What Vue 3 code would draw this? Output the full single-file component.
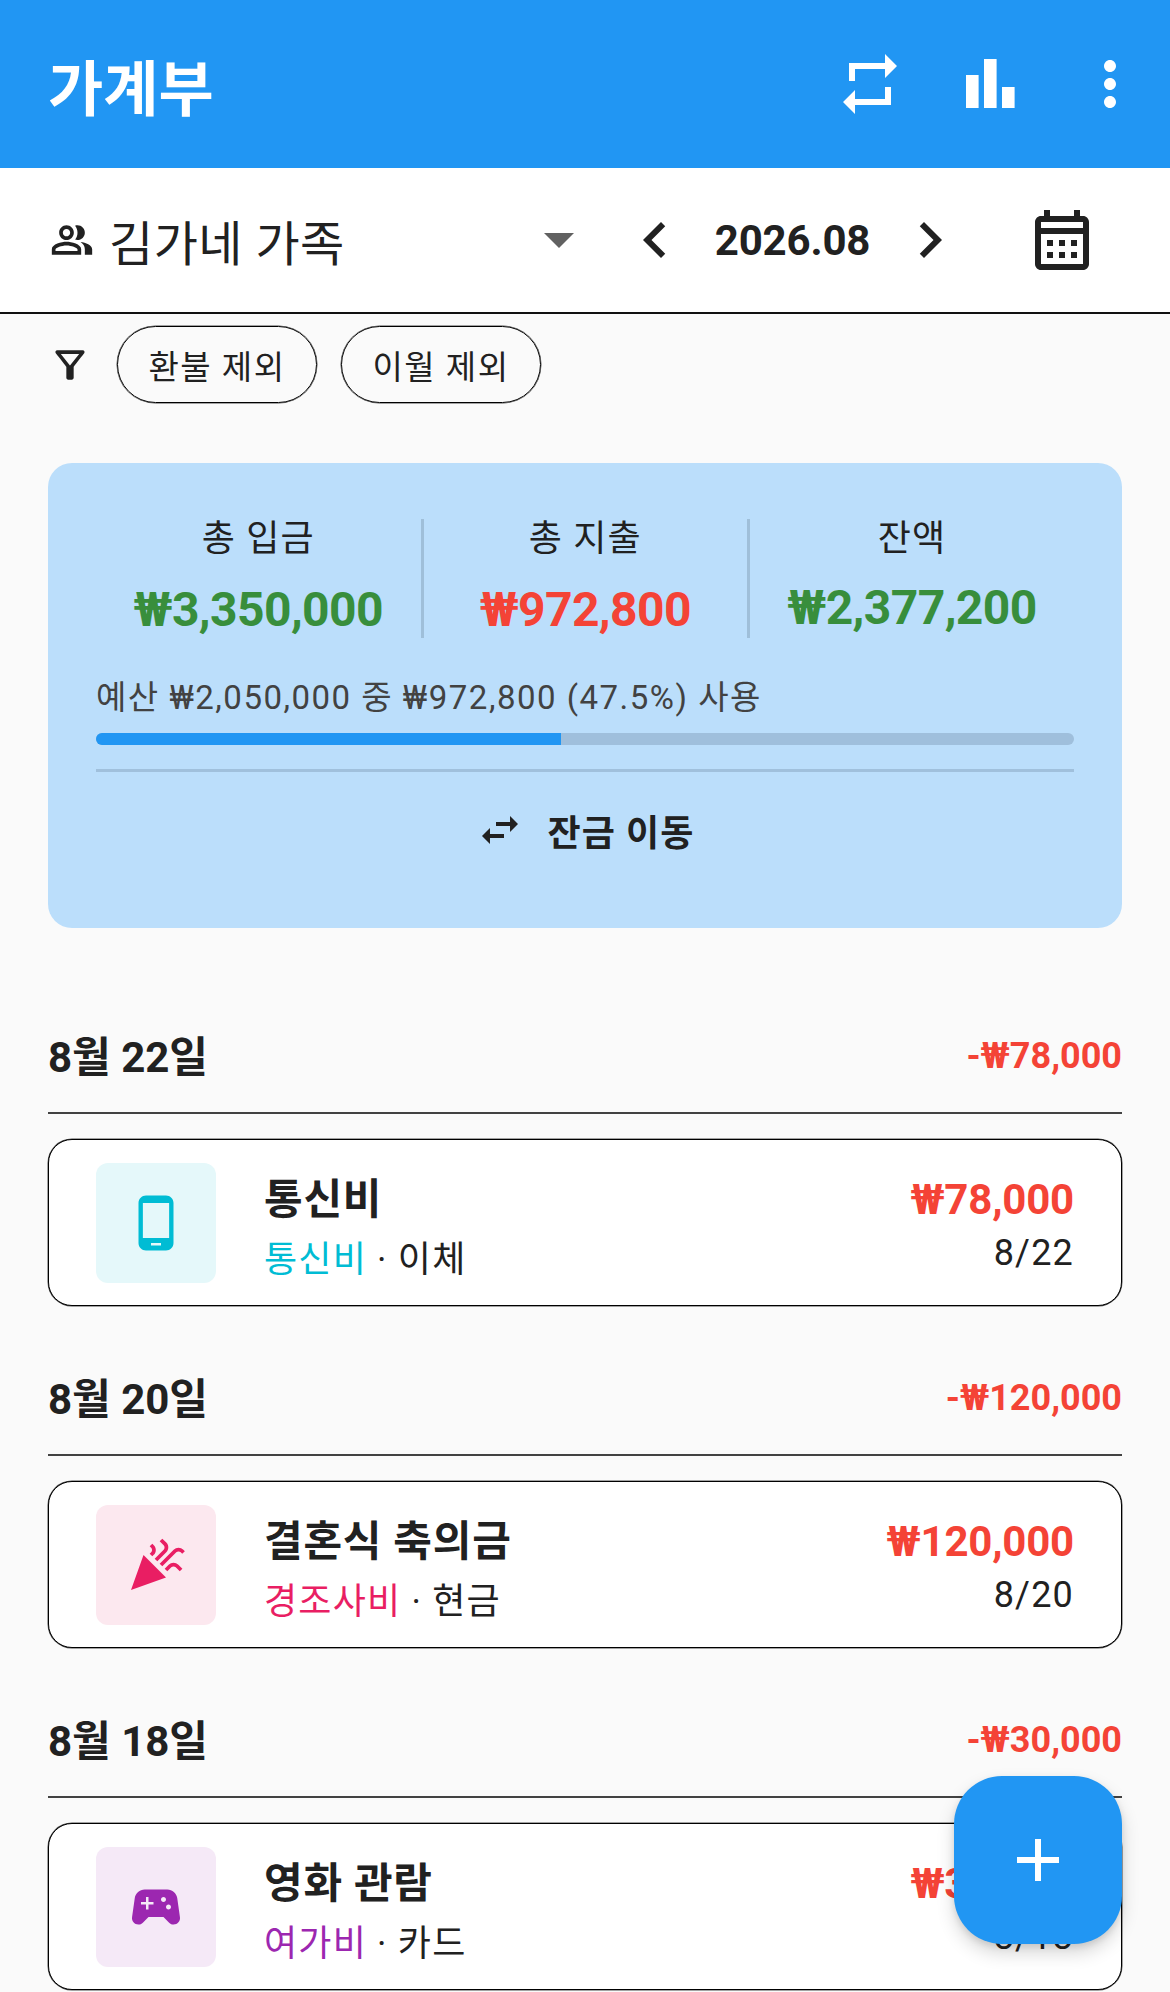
<template>
  <div class="app">
    <header class="top-bar">
      <h1 class="title">가계부</h1>
      <div class="top-actions">
        <svg class="icon-72" viewBox="0 0 24 24" fill="#fff"><path :d="icons.repeat" /></svg>
        <svg class="icon-72" viewBox="0 0 72 72" fill="#fff">
          <rect x="12" y="27" width="12.6" height="33" />
          <rect x="30" y="11" width="12.6" height="49" />
          <rect x="48" y="39" width="12.6" height="21" />
        </svg>
        <svg class="icon-72" viewBox="0 0 24 24" fill="#fff"><path :d="icons.more" /></svg>
      </div>
    </header>

    <!-- Ledger and month selector -->
    <div class="selector">
      <div class="ledger">
        <svg class="icon-people" viewBox="0 0 24 24" fill="#212121"><path :d="icons.people" /></svg>
        <span class="ledger-name">김가네 가족</span>
        <span class="caret"></span>
      </div>
      <svg class="icon-72" viewBox="0 0 24 24" fill="#212121"><path :d="icons.chevronLeft" /></svg>
      <span class="month">2026.08</span>
      <svg class="icon-72" viewBox="0 0 24 24" fill="#212121"><path :d="icons.chevronRight" /></svg>
      <svg class="icon-72 calendar" viewBox="0 0 24 24" fill="#212121"><path :d="icons.calendar" /></svg>
    </div>

    <div class="filters">
      <svg class="icon-filter" viewBox="0 0 24 24" fill="#212121"><path :d="icons.filter" /></svg>
      <span class="chip">환불 제외</span>
      <span class="chip">이월 제외</span>
    </div>

    <section class="summary">
      <div class="stats">
        <div v-for="stat in stats" :key="stat.label" class="stat">
          <span class="stat-label">{{ stat.label }}</span>
          <span class="stat-value" :class="{ raised: stat.raised }" :style="{ color: stat.color }">{{ stat.value }}</span>
        </div>
      </div>
      <p class="budget">예산 ₩2,050,000 중 ₩972,800 (47.5%) 사용</p>
      <div class="bar">
        <div class="bar-fill" :style="{ width: budgetUsed + '%' }"></div>
      </div>
      <div class="rule"></div>
      <div class="transfer">
        <svg class="icon-swap" viewBox="0 0 24 24" fill="#212121"><path :d="icons.swap" /></svg>
        <span>잔금 이동</span>
      </div>
    </section>

    <main class="list">
      <section v-for="item in items" :key="item.day" class="group">
        <div class="group-head">
          <span class="day">{{ item.day }}</span>
          <span class="day-total">-{{ item.amount }}</span>
        </div>
        <div class="card">
          <div class="card-icon" :style="{ background: item.tint }">
            <svg class="icon-60" viewBox="0 0 24 24" :fill="item.color"><path :d="item.icon" /></svg>
          </div>
          <div class="card-text">
            <span class="card-name">{{ item.name }}</span>
            <span class="card-sub"><span :style="{ color: item.color }">{{ item.category }}</span> · {{ item.method }}</span>
          </div>
          <div class="card-right">
            <span class="card-amount">{{ item.amount }}</span>
            <span class="card-date">{{ item.date }}</span>
          </div>
        </div>
      </section>
    </main>

    <button class="fab">
      <svg class="icon-72" viewBox="0 0 24 24" fill="#fff"><path d="M19 13h-6v6h-2v-6H5v-2h6V5h2v6h6v2z" /></svg>
    </button>
  </div>
</template>

<script setup>
const icons = {
  repeat: 'M7 7h10v3l4-4-4-4v3H5v6h2V7zm10 10H7v-3l-4 4 4 4v-3h12v-6h-2v4z',
  more: 'M12 8c1.1 0 2-.9 2-2s-.9-2-2-2-2 .9-2 2 .9 2 2 2zm0 2c-1.1 0-2 .9-2 2s.9 2 2 2 2-.9 2-2-.9-2-2-2zm0 6c-1.1 0-2 .9-2 2s.9 2 2 2 2-.9 2-2-.9-2-2-2z',
  people: 'M16.67 13.13C18.04 14.06 19 15.32 19 17v3h4v-3c0-2.18-3.57-3.47-6.33-3.87zM15 12c2.21 0 4-1.79 4-4s-1.79-4-4-4c-.47 0-.91.1-1.33.24C14.5 5.27 15 6.58 15 8s-.5 2.73-1.33 3.76c.42.14.86.24 1.33.24zM9 12c2.21 0 4-1.79 4-4s-1.79-4-4-4-4 1.79-4 4 1.79 4 4 4zm0-6c1.1 0 2 .9 2 2s-.9 2-2 2-2-.9-2-2 .9-2 2-2zM9 13c-2.67 0-8 1.34-8 4v3h16v-3c0-2.66-5.33-4-8-4zm6 5H3v-.99C3.2 16.29 6.3 15 9 15s5.8 1.29 6 2v1z',
  chevronLeft: 'M15.41 7.41L14 6l-6 6 6 6 1.41-1.41L10.83 12z',
  chevronRight: 'M10 6L8.59 7.41 13.17 12l-4.58 4.58L10 18l6-6z',
  calendar: 'M19 4h-1V2h-2v2H8V2H6v2H5c-1.1 0-2 .9-2 2v14c0 1.1.9 2 2 2h14c1.1 0 2-.9 2-2V6c0-1.1-.9-2-2-2zm0 16H5V10h14v10zm0-12H5V6h14v2zM9 14H7v-2h2v2zm4 0h-2v-2h2v2zm4 0h-2v-2h2v2zm-8 4H7v-2h2v2zm4 0h-2v-2h2v2zm4 0h-2v-2h2v2z',
  filter: 'M7 6h10l-5.01 6.3L7 6zm-2.75-.39C6.27 8.2 10 13 10 13v6c0 .55.45 1 1 1h2c.55 0 1-.45 1-1v-6s3.72-4.8 5.74-7.39c.51-.66.04-1.61-.79-1.61H5.04c-.83 0-1.3.95-.79 1.61z',
  swap: 'M6.99 11L3 15l3.99 4v-3H14v-2H6.99v-3zM21 9l-3.99-4v3H10v2h7.01v3L21 9z',
  phone: 'M16 1H8C6.34 1 5 2.34 5 4v16c0 1.66 1.34 3 3 3h8c1.66 0 3-1.34 3-3V4c0-1.66-1.34-3-3-3zm-2 20h-4v-1h4v1zm3.25-3H6.75V4h10.5v14z',
  party: 'M2 22l14-5-9-9zm12.53-9.47l5.59-5.59c.49-.49 1.28-.49 1.77 0l.59.59 1.06-1.06-.59-.59c-1.07-1.07-2.82-1.07-3.89 0l-5.59 5.59 1.06 1.06zm-4.47-5.65l-.59.59 1.06 1.06.59-.59c1.07-1.07 1.07-2.82 0-3.89l-.59-.59-1.06 1.07.59.59c.48.48.48 1.28 0 1.76zm7 5l-1.59 1.59 1.06 1.06 1.59-1.59c.49-.49 1.28-.49 1.77 0l1.61 1.61 1.06-1.06-1.61-1.61c-1.08-1.07-2.82-1.07-3.89 0zm-2-6l-3.59 3.59 1.06 1.06 3.59-3.59c1.07-1.07 1.07-2.82 0-3.89l-1.59-1.59-1.06 1.06 1.59 1.59c.48.49.48 1.29 0 1.77z',
  game: 'M21.58 16.09l-1.09-7.66C20.21 6.46 18.52 5 16.53 5H7.47C5.48 5 3.79 6.46 3.51 8.43l-1.09 7.66C2.2 17.63 3.39 19 4.94 19c.68 0 1.32-.27 1.8-.75L9 16h6l2.25 2.25c.48.48 1.13.75 1.8.75 1.56 0 2.75-1.37 2.53-2.91zM11 11H9v2H8v-2H6v-1h2V8h1v2h2v1zm4-1c-.55 0-1-.45-1-1s.45-1 1-1 1 .45 1 1-.45 1-1 1zm2 3c-.55 0-1-.45-1-1s.45-1 1-1 1 .45 1 1-.45 1-1 1z',
}

const budgetUsed = 47.5

const stats = [
  { label: '총 입금', value: '₩3,350,000', color: '#388e3c' },
  { label: '총 지출', value: '₩972,800', color: '#f44336' },
  { label: '잔액', value: '₩2,377,200', color: '#388e3c', raised: true },
]

const items = [
  { day: '8월 22일', amount: '₩78,000', name: '통신비', category: '통신비', method: '이체', date: '8/22', color: '#00bcd4', tint: '#e5f8fa', icon: icons.phone },
  { day: '8월 20일', amount: '₩120,000', name: '결혼식 축의금', category: '경조사비', method: '현금', date: '8/20', color: '#e91e63', tint: '#fce8ef', icon: icons.party },
  { day: '8월 18일', amount: '₩30,000', name: '영화 관람', category: '여가비', method: '카드', date: '8/18', color: '#9c27b0', tint: '#f5e9f7', icon: icons.game },
]
</script>

<style>
body {
  background: #fafafa;
}
</style>

<style scoped>
.app {
  position: relative;
  width: 1170px;
  height: 1992px;
  overflow: hidden;
  background: #fafafa;
  color: #212121;
  font-family: Roboto, "Noto Sans CJK KR", sans-serif;
}

svg {
  display: block;
  flex: none;
}

.icon-72 {
  width: 72px;
  height: 72px;
}

.icon-60 {
  width: 60px;
  height: 60px;
}

.top-bar {
  display: flex;
  align-items: center;
  justify-content: space-between;
  height: 168px;
  padding: 0 24px 0 48px;
  box-sizing: border-box;
  background: #2196f3;
}

.title {
  margin: 0;
  color: #fff;
  font-size: 60px;
  font-weight: 700;
}

.top-actions {
  display: flex;
  gap: 48px;
}

.selector {
  display: flex;
  align-items: center;
  height: 146px;
  padding: 0 72px 0 50px;
  box-sizing: border-box;
  background: #fff;
  border-bottom: 2px solid #111;
}

.ledger {
  display: flex;
  align-items: center;
  width: 569px;
}

.icon-people {
  width: 44px;
  height: 44px;
  margin-right: 15px;
}

.ledger-name {
  flex: 1;
  font-size: 48px;
  letter-spacing: 0.5px;
}

.caret {
  width: 0;
  height: 0;
  margin-right: 45px;
  border-left: 15px solid transparent;
  border-right: 15px solid transparent;
  border-top: 15px solid #616161;
}

.month {
  width: 203px;
  font-size: 42px;
  font-weight: 700;
  text-align: center;
  letter-spacing: -0.2px;
}

.calendar {
  margin-left: 60px;
}

.filters {
  display: flex;
  align-items: center;
  height: 77px;
  margin-top: 12px;
  padding-left: 48px;
}

.icon-filter {
  width: 44px;
  height: 44px;
  margin-right: 25px;
}

.chip {
  display: flex;
  align-items: center;
  justify-content: center;
  width: 200px;
  height: 77px;
  margin-right: 24px;
  box-sizing: border-box;
  border: 1px solid #000;
  border-radius: 39px;
  box-shadow: 0 0 0 0.5px rgba(0, 0, 0, 0.7);
  font-size: 33px;
  letter-spacing: 1.5px;
}

.summary {
  margin: 60px 48px 0;
  padding: 56px 48px 68px;
  background: #bbdefb;
  border-radius: 24px;
}

.stats {
  display: grid;
  grid-template-columns: 327.5px 326.5px 1fr;
  height: 119px;
}

.stat {
  display: flex;
  flex-direction: column;
  align-items: center;
  border-right: 3px solid #9fbfd9;
}

.stat:last-child {
  border-right: 0;
}

.stat-label {
  height: 40px;
  font-size: 36px;
  line-height: 40px;
  letter-spacing: 1.2px;
}

.stat-value {
  margin-top: 23px;
  font-size: 48px;
  font-weight: 700;
  line-height: 56px;
  letter-spacing: -0.6px;
}

.stat-value.raised {
  margin-top: 21px;
}

.budget {
  margin: 37px 0 0;
  color: #424242;
  font-size: 33px;
  line-height: 45px;
  letter-spacing: 1.5px;
}

.bar {
  height: 12px;
  margin-top: 13px;
  overflow: hidden;
  background: #9fbfdc;
  border-radius: 6px;
}

.bar-fill {
  height: 100%;
  background: #2196f3;
}

.rule {
  height: 3px;
  margin-top: 24px;
  background: #a0c0dc;
}

.transfer {
  display: flex;
  align-items: center;
  justify-content: center;
  gap: 24px;
  height: 60px;
  margin-top: 28px;
  font-size: 36px;
  font-weight: 700;
  letter-spacing: 1.1px;
}

.icon-swap {
  width: 48px;
  height: 48px;
}

.list {
  padding: 36px 48px 0;
}

.group {
  margin-top: 63px;
}

.group-head {
  display: flex;
  align-items: center;
  justify-content: space-between;
  height: 53px;
  padding-bottom: 32px;
  border-bottom: 2px solid #424242;
}

.day {
  font-size: 42px;
  font-weight: 700;
}

.day-total {
  padding-top: 5px;
  color: #f44336;
  font-size: 36px;
  font-weight: 700;
}

.card {
  display: flex;
  align-items: center;
  height: 167px;
  margin-top: 25px;
  padding: 0 47px;
  box-sizing: border-box;
  background: #fff;
  border: 1px solid #000;
  border-radius: 24px;
  box-shadow: 0 0 0 0.5px rgba(0, 0, 0, 0.7);
}

.card-icon {
  display: flex;
  align-items: center;
  justify-content: center;
  width: 120px;
  height: 120px;
  margin-right: 48px;
  border-radius: 12px;
}

.card-text {
  display: flex;
  flex: 1;
  flex-direction: column;
  margin-top: 13px;
}

.card-name {
  font-size: 42px;
  font-weight: 700;
  line-height: 59px;
  letter-spacing: 0.75px;
}

.card-sub {
  padding-top: 2px;
  font-size: 36px;
  line-height: 58px;
  letter-spacing: 1.2px;
}

.card-right {
  display: flex;
  flex-direction: column;
  align-items: flex-end;
  margin-top: 5px;
}

.card-amount {
  color: #f44336;
  font-size: 42px;
  font-weight: 700;
  line-height: 56px;
  letter-spacing: -0.2px;
}

.card-date {
  font-size: 36px;
  line-height: 50px;
  letter-spacing: 1.2px;
}

.fab {
  position: absolute;
  top: 1776px;
  left: 954px;
  display: flex;
  align-items: center;
  justify-content: center;
  width: 168px;
  height: 168px;
  padding: 0;
  background: #2196f3;
  border: 0;
  border-radius: 48px;
  box-shadow: 0 9px 18px rgba(0, 0, 0, 0.16), 0 3px 6px rgba(0, 0, 0, 0.1);
}
</style>
